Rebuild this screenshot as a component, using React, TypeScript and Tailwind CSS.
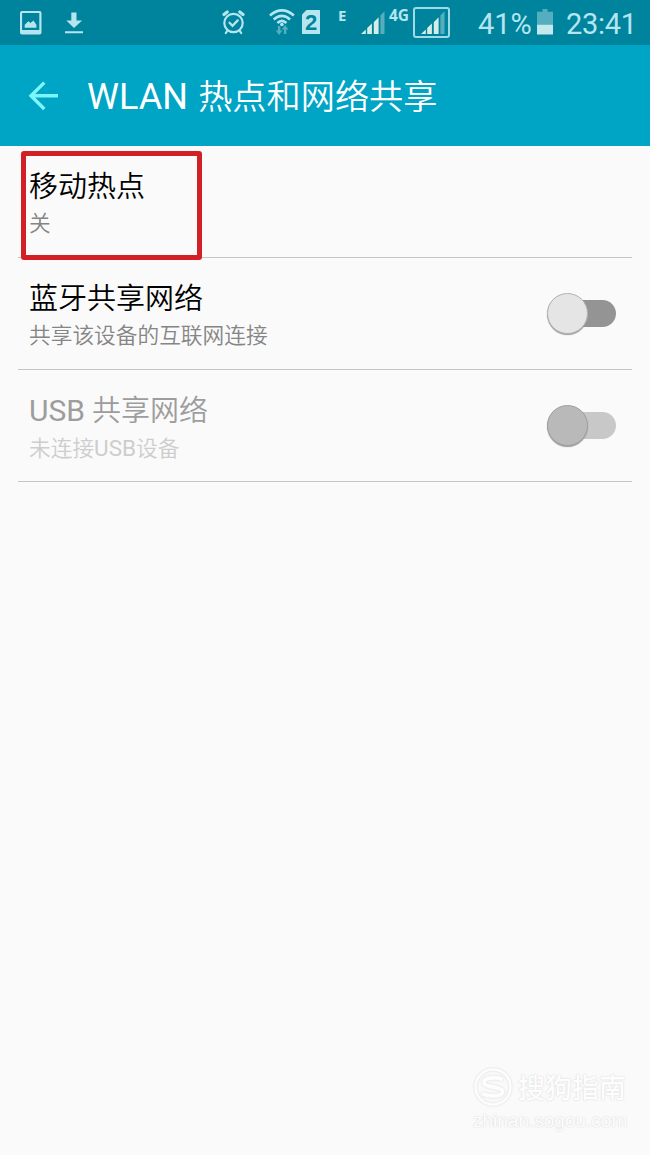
import React from "react";

const tint = "#b5e6f0";

function PictureIcon() {
  return (
    <svg className="ml-5 mt-[11px] h-6 w-[22px] shrink-0" viewBox="0 0 22 24">
      <path fill={tint} fillRule="evenodd" d="M2 0h17.5a2 2 0 0 1 2 2v19.5a2 2 0 0 1-2 2H2a2 2 0 0 1-2-2V2a2 2 0 0 1 2-2ZM2.100 2.100v16.900h17.200V2.100Z" />
      <path fill={tint} d="M4.700 16.800v-3l3.700-3.500 2 1.700 3-2.500 3 4.300v3Z" />
    </svg>
  );
}

function DownloadIcon() {
  return (
    <svg className="ml-[23px] mt-3 h-6 w-[19px] shrink-0" viewBox="0 0 19 24">
      <path fill={tint} d="M6.300 .5h5.200v8h5.600L9 16 1.300 8.500h5ZM0 19.200h18v2H0Z" />
    </svg>
  );
}

function AlarmIcon() {
  return (
    <svg className="ml-[138px] mt-[10px] h-[25px] w-6 shrink-0" viewBox="0 0 24 25" fill="none" stroke={tint} strokeWidth="2.200" strokeLinecap="round">
      <circle cx="11.500" cy="13" r="9.200" />
      <path strokeWidth="2.300" d="m7.500 12.800 3 3 5.200-5.400" />
      <path strokeWidth="3.200" d="M2 4.500 5.200 2M21 4.500 17.800 2" />
      <path d="m5.300 20.800-1.500 2.200M17.700 20.800l1.500 2.200" />
    </svg>
  );
}

function WifiIcon() {
  return (
    <svg className="ml-[23px] mt-[9px] h-[26px] w-[26px] shrink-0" viewBox="0 0 26 26" fill="none">
      <g stroke={tint} strokeWidth="2.600">
        <path d="M.9 6.500Q12.900-3.700 24.900 6.500" />
        <path d="M4.700 10.400Q12.900 3.200 21.100 10.400" />
        <path d="M8.400 14Q12.900 9.800 17.400 14" />
      </g>
      <circle cx="12.900" cy="15.500" r="1.800" fill={tint} />
      <path fill="#55adc0" d="M8.900 17h2.400v4.500h2.200L10.100 26l-3.400-4.500h2.200ZM14.900 25h2.400v-4.500h2.200L16.100 16l-3.400 4.500h2.200Z" />
    </svg>
  );
}

function SimBadge() {
  return (
    <div className="relative ml-[7px] mt-[10px] h-6 w-[18px] shrink-0">
      <svg className="h-6 w-[18px]" viewBox="0 0 18 24">
        <path fill={tint} d="M4.500 0H17.500Q18 0 18 .5V24H.5Q0 24 0 23.500V4.500Z" />
      </svg>
      <span className="absolute inset-0 text-center font-['Liberation_Sans',sans-serif] text-[22px] leading-[25px] font-bold text-[#00839d]">2</span>
    </div>
  );
}

function SignalBars() {
  return (
    <svg className="h-[23px] w-6 shrink-0" viewBox="0 0 24 23">
      <path fill="#d4eee7" d="M0 23 4.800 18.500V23ZM6.200 17.100l4.700-4.600V23H6.200ZM12.800 11.200l4.800-5V23h-4.800Z" />
      <path fill="#55adbd" d="m19.400 4.500 4.100-4.300V23h-4.100Z" />
    </svg>
  );
}

function StatusBar() {
  return (
    <header className="flex h-[45px] items-start bg-[#00839d] font-['Roboto','Noto_Sans_CJK_SC',sans-serif] text-[#b5e6f0]">
      <PictureIcon />
      <DownloadIcon />
      <AlarmIcon />
      <WifiIcon />
      <SimBadge />
      <span className="mt-[7px] ml-[18px] w-[14px] shrink-0 font-['Open_Sans',sans-serif] text-[15px] leading-4 font-bold">E</span>
      <div className="mt-[11px] ml-[9px] shrink-0">
        <SignalBars />
      </div>
      <span className="mt-[7px] ml-1 w-5 shrink-0 font-['Open_Sans',sans-serif] text-[15.500px] leading-4 font-bold">4G</span>
      <div className="mt-[7px] ml-1 flex h-[31px] w-[37px] shrink-0 items-start rounded-[3px] border-2 border-[#9edbe6] pt-[2px] pl-[6px]">
        <SignalBars />
      </div>
      <span className="mt-[7px] ml-7 w-[58px] shrink-0 text-[29px] leading-[34px] font-normal whitespace-nowrap">41%</span>
      <svg className="mt-[9px] h-[26px] w-[18px] shrink-0" viewBox="0 0 18 26">
        <path fill="#55adc0" d="M6.500 0h5v2.800H17V16H1V2.800h5.500Z" />
        <path fill="#c5e8ec" d="M1 15.800h16V25.500H1Z" />
      </svg>
      <span className="mt-[7px] ml-3 shrink-0 text-[29px] leading-[34px] font-normal tracking-[-0.300px] whitespace-nowrap">23:41</span>
    </header>
  );
}

function TitleBar() {
  return (
    <div className="flex h-[101px] items-center bg-[#00a4c5] text-white">
      <svg className="ml-7 h-[30px] w-[31px]" viewBox="0 0 31 30" fill="none" stroke="#7df6fb" strokeWidth="3.400">
        <path d="M30 14.800H3M16.300 1.600 3 14.800l13.300 13.200" />
      </svg>
      <h1 className="ml-[28px] pt-[2px] text-[34.200px] leading-[44px] font-[350] whitespace-nowrap">
        <span className="mr-[2px] text-[36px] font-normal">WLAN</span> 热点和网络共享
      </h1>
    </div>
  );
}

function Toggle({ disabled = false }: { disabled?: boolean }) {
  return (
    <button
      type="button"
      disabled={disabled}
      className={`mr-4 flex h-[27px] w-[55px] items-center rounded-full ${disabled ? "bg-[#c8c8c8]" : "bg-[#949494]"}`}
    >
      <span
        className={`-mt-px -ml-[14px] h-[41px] w-[41px] shrink-0 rounded-full border shadow-[0_1px_1px_#999] ${
          disabled ? "border-[#a0a0a0] bg-[#b9b9b9]" : "border-[#b2b2b2] bg-[#e5e5e5]"
        }`}
      />
    </button>
  );
}

type RowProps = {
  title: React.ReactNode;
  detail: React.ReactNode;
  titleColor?: string;
  detailColor?: string;
  toggle?: React.ReactNode;
};

function SettingRow({ title, detail, titleColor = "text-black", detailColor = "text-[#858585]", toggle }: RowProps) {
  return (
    <li className="mx-[18px] flex h-28 items-center justify-between border-b border-[#c5c5c5] pl-[11px]">
      <div className="pt-1 font-[350] whitespace-nowrap">
        <div className={`text-[29px] leading-[41px] ${titleColor}`}>{title}</div>
        <div className={`text-[21.700px] leading-[32px] ${detailColor}`}>{detail}</div>
      </div>
      {toggle}
    </li>
  );
}

function Watermark() {
  return (
    <footer className="mt-auto mb-[21px] ml-[473px] w-[156px] text-[#fdfdfd] [text-shadow:0_0_2px_#d8d8d8,0_0_1px_#e6e6e6]">
      <div className="flex items-center">
        <svg className="h-10 w-10 [filter:drop-shadow(0_0_1px_#d8d8d8)]" viewBox="0 0 40 40" fill="none" stroke="#fdfdfd">
          <circle cx="20" cy="20" r="17.500" strokeWidth="2.500" />
          <path strokeWidth="4" d="M30 12.500C24 10 11 10 11 15.500S29.500 19 29.500 24.500 16 30 9.500 26.500" />
        </svg>
        <span className="ml-[5px] pt-1 text-[27px] leading-9 font-medium whitespace-nowrap">搜狗指南</span>
      </div>
      <div className="font-['Liberation_Sans',sans-serif] text-[19px] leading-[27px] whitespace-nowrap">zhinan.sogou.com</div>
    </footer>
  );
}

export default function App() {
  return (
    <div className="flex h-[1155px] w-[650px] flex-col overflow-hidden bg-[#fafafa] font-['Roboto','Noto_Sans_CJK_SC',sans-serif]">
      <StatusBar />
      <TitleBar />
      <main className="relative">
        <ul>
          <SettingRow title="移动热点" detail="关" />
          <SettingRow title="蓝牙共享网络" detail="共享该设备的互联网连接" toggle={<Toggle />} />
          <SettingRow
            title={<><span className="text-[30px] font-normal">USB</span> 共享网络</>}
            detail={<>未连接<span className="text-[22.500px] font-normal">USB</span>设备</>}
            titleColor="text-[#9d9d9d]"
            detailColor="text-[#cdcdcd]"
            toggle={<Toggle disabled />}
          />
        </ul>
        <div className="pointer-events-none absolute top-[5px] left-[21px] h-[109px] w-[181px] rounded-[3px] border-[5px] border-[#d32027]" />
      </main>
      <Watermark />
    </div>
  );
}
